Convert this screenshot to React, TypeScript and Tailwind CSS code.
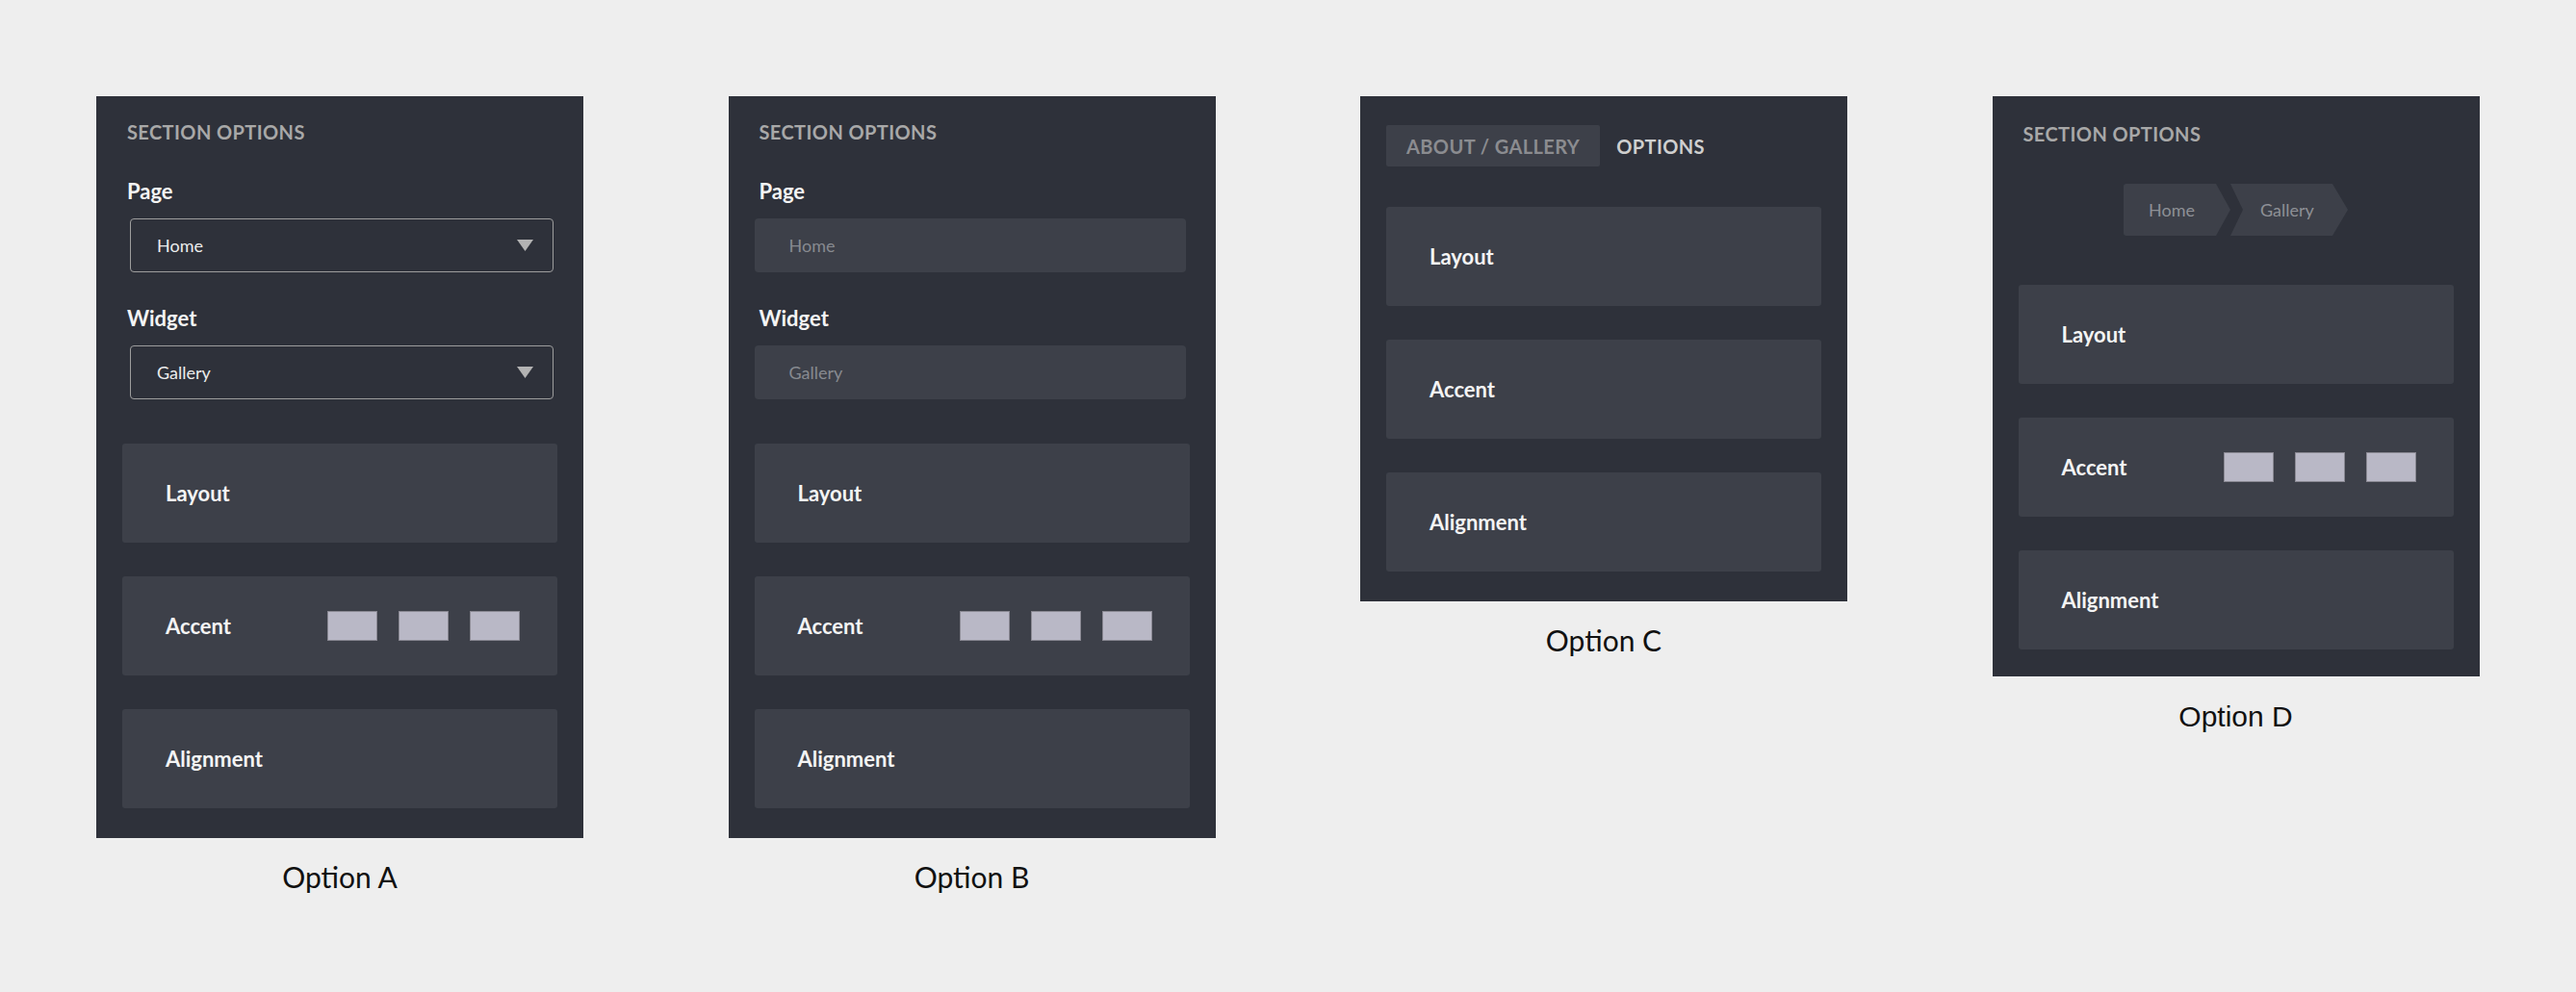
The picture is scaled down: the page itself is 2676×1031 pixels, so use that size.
const swatchIds = [0, 1, 2];

function Swatches() {
  return (
    <div className="flex gap-[22px]">
      {swatchIds.map((i) => (
        <div key={i} className="w-[52px] h-[31px] bg-[#b9b8c6] border-[1.5px] border-[#8a8993]" />
      ))}
    </div>
  );
}

function Cards({ top, swatches }: { top: string; swatches: boolean }) {
  return (
    <div className={`${top} flex flex-col gap-[35px]`}>
      {["Layout", "Accent", "Alignment"].map((label) => (
        <div
          key={label}
          className="h-[103px] rounded-[3px] bg-[#3d4049] flex items-center justify-between pl-[45px] pr-[39px]"
        >
          <span className="text-[22px] leading-[24px] font-bold text-[#f4f4f4]">{label}</span>
          {swatches && label === "Accent" && <Swatches />}
        </div>
      ))}
    </div>
  );
}

function Title({ pt }: { pt: string }) {
  return (
    <div className={`${pt} pl-[5px] text-[20px] leading-[24px] font-bold tracking-[0.02em] text-[#a8a8a8]`}>
      SECTION OPTIONS
    </div>
  );
}

function FieldLabel({ mt, children }: { mt: string; children: string }) {
  return (
    <div className={`${mt} pl-[5px] text-[22px] leading-[24px] font-bold text-[#f4f4f4]`}>{children}</div>
  );
}

function Dropdown({ value }: { value: string }) {
  return (
    <div className="mt-[16px] ml-[8px] mr-[4px] h-[56px] rounded-[4px] border-[1.5px] border-[#9d9d9d] flex items-center justify-between pl-[27px] pr-[20px]">
      <span className="text-[18px] text-[#ececec]">{value}</span>
      <svg width="17" height="12" viewBox="0 0 17 12">
        <polygon points="0,0 17,0 8.5,12" fill="#b3b3b3" />
      </svg>
    </div>
  );
}

function Field({ value }: { value: string }) {
  return (
    <div className="mt-[16px] mr-[4px] h-[56px] rounded-[4px] bg-[#3d4049] flex items-center pl-[36px]">
      <span className="text-[18px] text-[#878a90]">{value}</span>
    </div>
  );
}

function Column({
  label,
  arial,
  pb = "pb-[31px]",
  children,
}: {
  label: string;
  arial?: boolean;
  pb?: string;
  children: React.ReactNode;
}) {
  return (
    <div className="w-[506px] flex flex-col items-stretch">
      <div className={`bg-[#2e313a] px-[27px] ${pb} font-['Lato',sans-serif]`}>{children}</div>
      {arial ? (
        <div className="mt-[24px] text-center text-[30px] leading-[36px] text-[#111111] font-['Liberation_Sans',Arial,sans-serif]">
          {label}
        </div>
      ) : (
        <div className="mt-[22px] text-center text-[30px] leading-[36px] font-normal text-[#111111] font-['Lato',sans-serif]">
          {label}
        </div>
      )}
    </div>
  );
}

export default function App() {
  return (
    <div className="min-h-screen bg-[#eeeeee] pt-[100px] pl-[100px] flex items-start gap-[150.5px]">
      {/* Option A: outlined dropdowns */}
      <Column label="Option A">
        <Title pt="pt-[25px]" />
        <FieldLabel mt="mt-[38px]">Page</FieldLabel>
        <Dropdown value="Home" />
        <FieldLabel mt="mt-[36px]">Widget</FieldLabel>
        <Dropdown value="Gallery" />
        <Cards top="mt-[46px]" swatches />
      </Column>

      {/* Option B: filled fields */}
      <Column label="Option B">
        <Title pt="pt-[25px]" />
        <FieldLabel mt="mt-[38px]">Page</FieldLabel>
        <Field value="Home" />
        <FieldLabel mt="mt-[36px]">Widget</FieldLabel>
        <Field value="Gallery" />
        <Cards top="mt-[46px]" swatches />
      </Column>

      {/* Option C: tabs */}
      <Column label="Option C">
        <div className="pt-[30px] flex items-center">
          <div className="h-[43px] px-[21px] rounded-[2px] bg-[#3d4049] flex items-center text-[20px] font-bold tracking-[0.02em] text-[#8b8c90]">
            ABOUT / GALLERY
          </div>
          <div className="ml-[17px] text-[20px] font-bold tracking-[0.02em] text-[#cfcfcf]">OPTIONS</div>
        </div>
        <Cards top="mt-[42px]" swatches={false} />
      </Column>

      {/* Option D: breadcrumb */}
      <Column label="Option D" arial pb="pb-[28px]">
        <Title pt="pt-[27px]" />
        <div className="mt-[40px] flex justify-center">
          <div className="w-[111px] h-[54px] rounded-l-[3px] bg-[#3d4049] flex items-center pl-[26px] text-[18px] text-[#8e9096] [clip-path:polygon(0_0,96px_0,111px_50%,96px_100%,0_100%)]">
            Home
          </div>
          <div className="w-[122px] h-[54px] bg-[#3d4049] flex items-center pl-[31px] text-[18px] text-[#8e9096] [clip-path:polygon(0_0,106px_0,122px_50%,106px_100%,0_100%,13px_50%)]">
            Gallery
          </div>
        </div>
        <Cards top="mt-[51px]" swatches />
      </Column>
    </div>
  );
}
